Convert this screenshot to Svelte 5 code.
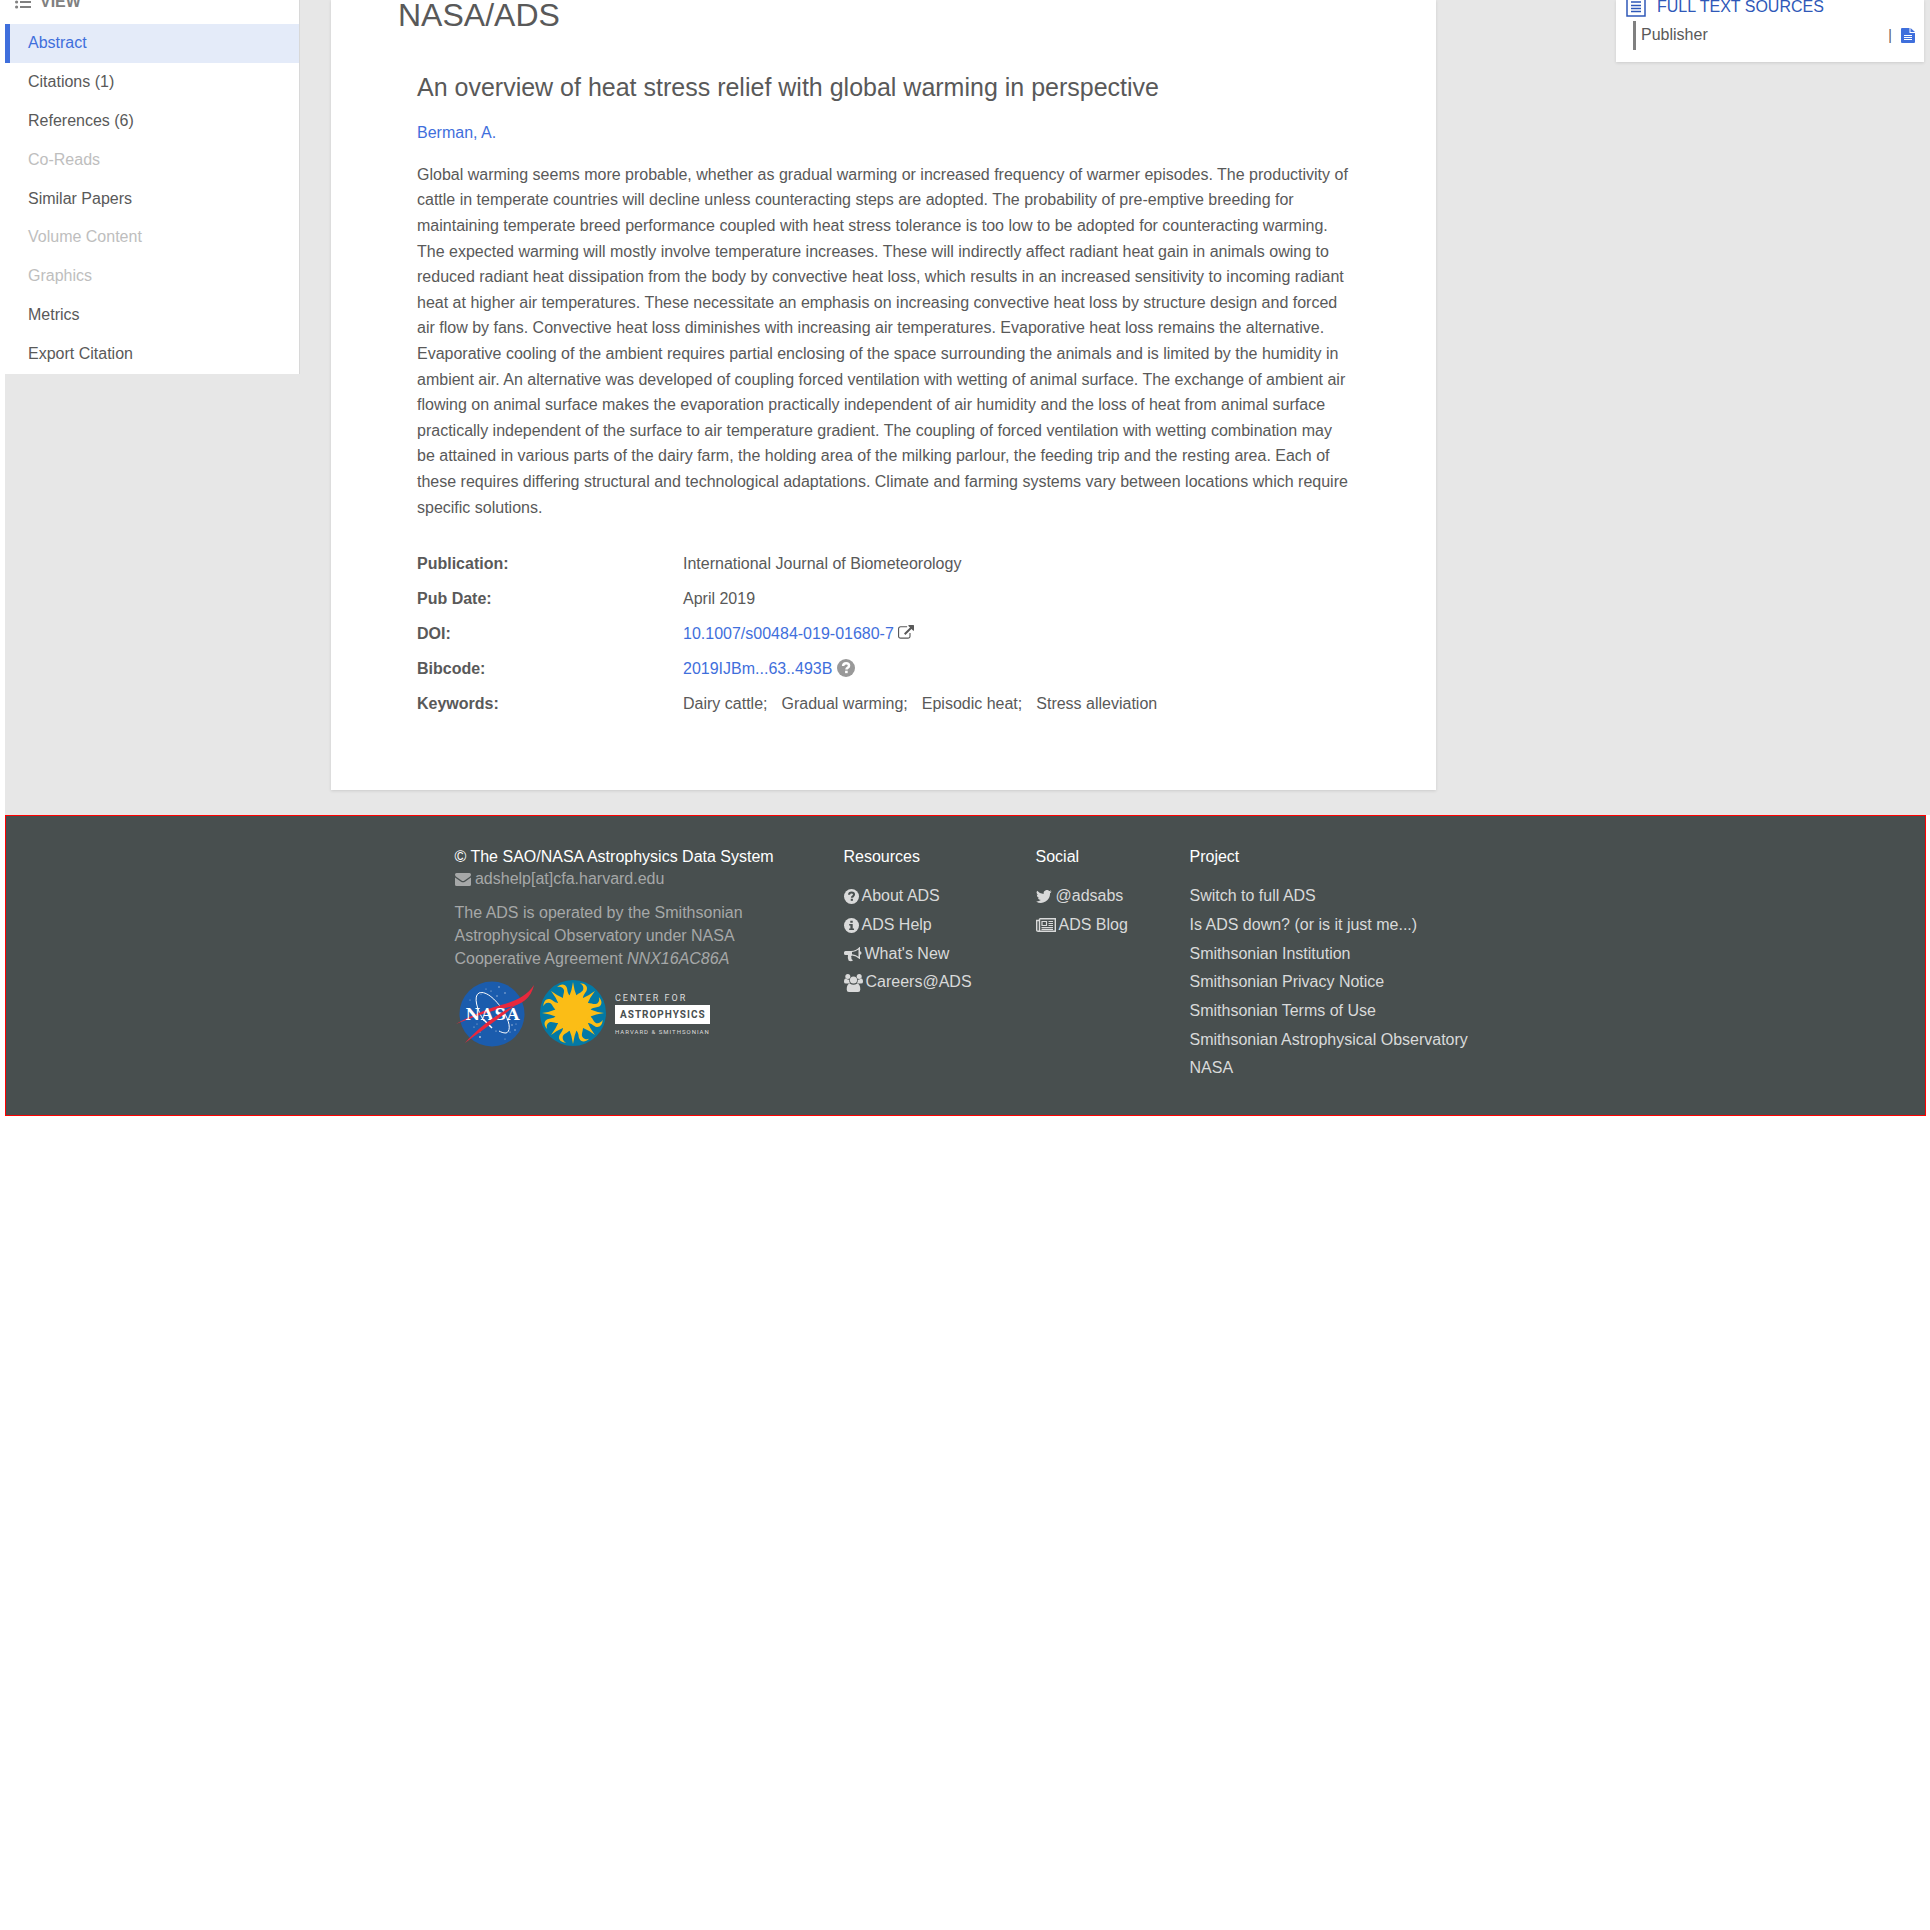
<script>
  const views = [
    { label: 'Abstract', state: 'active' },
    { label: 'Citations (1)', state: '' },
    { label: 'References (6)', state: '' },
    { label: 'Co-Reads', state: 'disabled' },
    { label: 'Similar Papers', state: '' },
    { label: 'Volume Content', state: 'disabled' },
    { label: 'Graphics', state: 'disabled' },
    { label: 'Metrics', state: '' },
    { label: 'Export Citation', state: '' }
  ];

  const keywords = ['Dairy cattle', 'Gradual warming', 'Episodic heat', 'Stress alleviation'];

  const projectLinks = [
    'Switch to full ADS',
    'Is ADS down? (or is it just me...)',
    'Smithsonian Institution',
    'Smithsonian Privacy Notice',
    'Smithsonian Terms of Use',
    'Smithsonian Astrophysical Observatory',
    'NASA'
  ];

  // The sunburst alternates straight points with curved flames.
  const straightRays = [0, 45, 90, 135, 180, 225, 270, 315];
  const curvedRays = straightRays.map((a) => a + 22.5);
</script>

<div class="page">
  <div class="content">
    <nav class="views" aria-label="View">
      <h2>
        <svg width="16" height="14" viewBox="0 0 16 14" aria-hidden="true">
          <g fill="currentColor">
            <circle cx="1.6" cy="2" r="1.6" /><circle cx="1.6" cy="7" r="1.6" /><circle cx="1.6" cy="12" r="1.6" />
            <path d="M5 1h11v2H5zM5 6h11v2H5zM5 11h11v2H5z" />
          </g>
        </svg>
        VIEW
      </h2>
      <ul>
        {#each views as view}
          <li><a href="#view" class={view.state}>{view.label}</a></li>
        {/each}
      </ul>
    </nav>

    <main>
      <h1>NASA/ADS</h1>
      <article>
        <h2>An overview of heat stress relief with global warming in perspective</h2>
        <a class="author" href="#author">Berman, A.</a>
        <p>
          Global warming seems more probable, whether as gradual warming or increased frequency of warmer
          episodes. The productivity of cattle in temperate countries will decline unless counteracting
          steps are adopted. The probability of pre-emptive breeding for maintaining temperate breed
          performance coupled with heat stress tolerance is too low to be adopted for counteracting
          warming. The expected warming will mostly involve temperature increases. These will indirectly
          affect radiant heat gain in animals owing to reduced radiant heat dissipation from the body by
          convective heat loss, which results in an increased sensitivity to incoming radiant heat at
          higher air temperatures. These necessitate an emphasis on increasing convective heat loss by
          structure design and forced air flow by fans. Convective heat loss diminishes with increasing
          air temperatures. Evaporative heat loss remains the alternative. Evaporative cooling of the
          ambient requires partial enclosing of the space surrounding the animals and is limited by the
          humidity in ambient air. An alternative was developed of coupling forced ventilation with
          wetting of animal surface. The exchange of ambient air flowing on animal surface makes the
          evaporation practically independent of air humidity and the loss of heat from animal surface
          practically independent of the surface to air temperature gradient. The coupling of forced
          ventilation with wetting combination may be attained in various parts of the dairy farm, the
          holding area of the milking parlour, the feeding trip and the resting area. Each of these
          requires differing structural and technological adaptations. Climate and farming systems vary
          between locations which require specific solutions.
        </p>
        <dl>
          <dt>Publication:</dt>
          <dd>International Journal of Biometeorology</dd>
          <dt>Pub Date:</dt>
          <dd>April 2019</dd>
          <dt>DOI:</dt>
          <dd>
            <a href="#doi">10.1007/s00484-019-01680-7</a>
            <svg width="16" height="16" viewBox="0 0 1792 1792" aria-hidden="true">
              <path fill="currentColor" d="M1408 928v320q0 119-84.500 203.500T1120 1536H288q-119 0-203.500-84.500T0 1248V416q0-119 84.500-203.500T288 128h704q14 0 23 9t9 23v64q0 14-9 23t-23 9H288q-66 0-113 47t-47 113v832q0 66 47 113t113 47h832q66 0 113-47t47-113V928q0-14 9-23t23-9h64q14 0 23 9t9 23zm384-864v512q0 26-19 45t-45 19-45-19l-176-176-652 652q-10 10-23 10t-23-10L695 983q-10-10-10-23t10-23l652-652-176-176q-19-19-19-45t19-45 45-19h512q26 0 45 19t19 45z" />
            </svg>
          </dd>
          <dt>Bibcode:</dt>
          <dd>
            <a href="#bibcode">2019IJBm...63..493B</a>
            <svg class="help" width="18" height="18" viewBox="0 0 16 16" aria-hidden="true">
              <circle cx="8" cy="8" r="8" fill="currentColor" />
              <path d="M5.400 6.200C5.500 4.500 6.600 3.700 8.100 3.700c1.500 0 2.600.9 2.600 2.200 0 1.900-2.300 1.900-2.300 3.500" fill="none" stroke="#fff" stroke-width="2.200" />
              <path d="M7.200 10.400h2.300v2.200H7.200z" fill="#fff" />
            </svg>
          </dd>
          <dt>Keywords:</dt>
          <dd class="keywords">
            {#each keywords as keyword, i}
              <span>{keyword}{i < keywords.length - 1 ? ';' : ''}</span>
            {/each}
          </dd>
        </dl>
      </article>
    </main>

    <aside>
      <h2>
        <svg width="20" height="20" viewBox="0 0 20 20" aria-hidden="true">
          <path d="M1 1h18v18H1z" fill="none" stroke="currentColor" stroke-width="1.500" />
          <path d="M5 5h10M5 8.500h10M5 11.500h10M5 14.500h10" stroke="currentColor" stroke-width="1.500" />
        </svg>
        FULL TEXT SOURCES
      </h2>
      <div class="source">
        <span class="name">Publisher</span>
        <span class="divider">|</span>
        <a href="#publisher" aria-label="Publisher article">
          <svg width="14" height="15" viewBox="0 0 14 15" aria-hidden="true">
            <path d="M1 0h7.500v5H14v9q0 1-1 1H1q-1 0-1-1V1q0-1 1-1zM9.500 0L14 4H9.500z" fill="currentColor" />
            <path d="M3 7.500h8M3 9.500h8M3 11.500h8" stroke="#fff" />
          </svg>
        </a>
      </div>
    </aside>
  </div>

  <footer>
    <section class="about">
      <h3>© The SAO/NASA Astrophysics Data System</h3>
      <address>
        <svg width="16" height="13" viewBox="0 0 16 13" aria-hidden="true">
          <path d="M1.500 0h13Q16 0 16 1.500 16 3 14.500 4L9.500 7.500Q8 8.500 6.500 7.500L1.500 4Q0 3 0 1.500 0 0 1.500 0zM0 4.500l6 4.200q2 1.300 4 0l6-4.200v7q0 1.500-1.500 1.500h-13Q0 13 0 11.500z" fill="currentColor" />
        </svg>
        adshelp[at]cfa.harvard.edu
      </address>
      <p>The ADS is operated by the Smithsonian Astrophysical Observatory under NASA Cooperative Agreement <em>NNX16AC86A</em></p>
      <div class="logos">
        <a href="#nasa" aria-label="NASA">
          <svg width="80" height="68" viewBox="0 0 80 68">
            <circle cx="37" cy="35" r="32.500" fill="#1b5cad" />
            <g fill="#fff" opacity="0.700">
              <circle cx="44" cy="8" r=".7" /><circle cx="36" cy="12" r=".6" /><circle cx="31" cy="10" r=".5" />
              <circle cx="50" cy="14" r=".7" /><circle cx="42" cy="17" r=".7" /><circle cx="26" cy="15" r=".5" />
              <circle cx="19" cy="48" r=".6" /><circle cx="25" cy="53" r=".6" /><circle cx="22" cy="45" r=".5" />
              <circle cx="41" cy="52" r=".6" /><circle cx="57" cy="46" r=".7" /><circle cx="60" cy="51" r=".7" />
              <circle cx="61" cy="45" r=".5" /><circle cx="55" cy="53" r=".6" /><circle cx="25" cy="58" r=".9" />
              <circle cx="50" cy="60" r=".5" /><circle cx="15" cy="21" r=".5" /><circle cx="35" cy="47" r=".5" />
            </g>
            <path d="M29 42C22 31 18 17 24 14 31 11 43 22 50 35 56 46 55 53 51 54 48 54 46 53 44 52" fill="none" stroke="#fff" />
            <path d="M1 45C13 38 31 30 46 26 60 22 71 18 79 6 76 20 65 27 50 29 34 32 16 39 1 45z" fill="#e8283c" />
            <path d="M29 41l8 8" stroke="#fff" stroke-width="1.500" />
            <text x="38" y="41" text-anchor="middle" class="nasa-word">NASA</text>
            <path d="M10 64C24 48 39 37 62 25 45 39 26 52 10 64z" fill="#e8283c" />
          </svg>
        </a>
        <a href="#smithsonian" aria-label="Smithsonian">
          <svg width="66" height="68" viewBox="-33 -34 66 68">
            <circle r="33" fill="#0379a5" />
            <g fill="#fbbd16">
              <circle r="18" />
              {#each straightRays as angle}
                <path d="M-4-16Q-1-23 0-31 1-23 4-16z" transform="rotate({angle})" />
              {/each}
              {#each curvedRays as angle}
                <path d="M-4-16C-3-21 2-23 0-27-1-29-3-30-5-30 0-32 4-30 4-26 4-23 2-21 4-16z" transform="rotate({angle})" />
              {/each}
            </g>
          </svg>
        </a>
        <a class="cfa" href="#cfa" aria-label="Center for Astrophysics">
          <svg width="97" height="44" viewBox="0 0 97 44">
            <text x="0" y="10" class="cfa-top">CENTER FOR</text>
            <path d="M0 14h95v19H0z" fill="#fff" />
            <text x="5" y="27" class="cfa-mid">ASTROPHYSICS</text>
            <text x="0" y="43" class="cfa-low">HARVARD &amp; SMITHSONIAN</text>
          </svg>
        </a>
      </div>
    </section>

    <section>
      <h3>Resources</h3>
      <ul>
        <li>
          <a href="#about">
            <svg width="15" height="15" viewBox="0 0 16 16" aria-hidden="true">
              <circle cx="8" cy="8" r="8" fill="currentColor" />
              <path d="M5.400 6.200C5.500 4.500 6.600 3.700 8.100 3.700c1.500 0 2.600.9 2.600 2.200 0 1.900-2.300 1.900-2.300 3.500" fill="none" stroke="#484f4f" stroke-width="2.200" />
              <path d="M7.200 10.400h2.300v2.200H7.200z" fill="#484f4f" />
            </svg>
            About ADS
          </a>
        </li>
        <li>
          <a href="#help">
            <svg width="15" height="15" viewBox="0 0 16 16" aria-hidden="true">
              <circle cx="8" cy="8" r="8" fill="currentColor" />
              <path d="M6.700 2.800h2.600v2.300H6.700zM5.500 6.400h3.800v4.900h1.400v1.600H5.500v-1.600h1.300V8H5.500z" fill="#484f4f" />
            </svg>
            ADS Help
          </a>
        </li>
        <li>
          <a href="#new">
            <svg width="18" height="15" viewBox="0 0 18 15" aria-hidden="true">
              <path d="M0 5.500Q0 4 1.500 4H7q5 0 8.500-4H16v4.200q1.500.3 1.500 1.800T16 7.800V12h-.5Q12 8.700 8 8.400q-1.600.9-.5 2.300-.9 1.200 1.500 2.600-1.600 1.700-4.300.5Q3.300 11 4 8H1.500Q0 8 0 6.500zM8 5v2.200q3.500.3 6.500 2.600V2.400Q11.500 4.700 8 5z" fill="currentColor" fill-rule="evenodd" />
            </svg>
            What's New
          </a>
        </li>
        <li>
          <a href="#careers">
            <svg width="19" height="18" viewBox="0 0 19 18" aria-hidden="true">
              <g fill="currentColor">
                <circle cx="3.800" cy="2.600" r="2.500" /><circle cx="15.200" cy="2.600" r="2.500" /><circle cx="9.500" cy="6" r="3.600" />
                <path d="M0 8q0-3.500 1.600-3.500Q4 6 5.200 5.500 5 8 6.300 9.500H2Q0 9.500 0 8zM19 8q0-3.500-1.600-3.500Q15 6 13.800 5.500 14 8 12.700 9.500H17q2 0 2-1.500zM2.700 15.500q0-5.800 3.300-5.800 3.500 2.200 7 0 3.300 0 3.300 5.800 0 2.500-2.300 2.500H5q-2.300 0-2.300-2.500z" />
              </g>
            </svg>
            Careers@ADS
          </a>
        </li>
      </ul>
    </section>

    <section>
      <h3>Social</h3>
      <ul>
        <li>
          <a href="#twitter">
            <svg width="17" height="13" viewBox="0 0 26 20" aria-hidden="true">
              <path d="M24 2.400a10 10 0 0 1-2.800.8A5 5 0 0 0 23.300.5a10 10 0 0 1-3.100 1.200 4.900 4.900 0 0 0-8.400 4.500A14 14 0 0 1 1.700 1a4.900 4.900 0 0 0 1.500 6.600A5 5 0 0 1 1 7v.1a4.900 4.900 0 0 0 3.900 4.800 5 5 0 0 1-2.200.1 4.900 4.900 0 0 0 4.600 3.400A9.900 9.900 0 0 1 0 17.500 14 14 0 0 0 21.500 5a10 10 0 0 0 2.500-2.600z" fill="currentColor" />
            </svg>
            @adsabs
          </a>
        </li>
        <li>
          <a href="#blog">
            <svg width="20" height="14" viewBox="0 0 20 14" aria-hidden="true">
              <path d="M3.500.7h15.800v12.600H2.200Q.7 13.300.7 12V2.500h2.800M3.500.7V12q0 1.300-1.300 1.300" fill="none" stroke="currentColor" stroke-width="1.400" />
              <path d="M6 3.500h4.500v4H6zM12.500 3.500H17M12.500 5.500H17M12.500 7.500H17M5.500 9.500H17M5.500 11.300H17" fill="none" stroke="currentColor" stroke-width="1.200" />
            </svg>
            ADS Blog
          </a>
        </li>
      </ul>
    </section>

    <section>
      <h3>Project</h3>
      <ul>
        {#each projectLinks as link}
          <li><a href="#project">{link}</a></li>
        {/each}
      </ul>
    </section>
  </footer>
</div>

<style>
  :global(body) {
    margin: 0;
    background: #fff;
  }

  .page {
    padding-left: 5px;
    font: 16px/1.43 'Liberation Sans', Arial, sans-serif;
    color: #595959;
  }

  h1, h2, h3, p, ul, dl, dd {
    margin: 0;
    padding: 0;
    font-weight: 400;
  }

  ul {
    list-style: none;
  }

  a {
    color: #3f6fdc;
    text-decoration: none;
  }

  .content {
    display: grid;
    grid-template-columns: 295px minmax(0, 1105px) minmax(308px, auto);
    column-gap: 31px;
    align-items: start;
    padding: 0 6px 25px 0;
    background: #e7e7e7;
  }

  .views {
    background: #fff;
    border-right: 1px solid #d8d8d8;
  }

  .views h2 {
    display: flex;
    align-items: center;
    gap: 9px;
    height: 24px;
    margin-top: -10px;
    padding: 0 10px 10px;
    font-size: 16px;
    font-weight: 700;
    color: #808080;
  }

  .views a {
    display: block;
    padding: 8px 18px;
    border-left: 5px solid transparent;
    color: #595959;
  }

  .views .active {
    background: #e4ebf9;
    border-color: #3f6fdc;
    color: #3f6fdc;
  }

  .views .disabled {
    color: #bebebe;
  }

  main {
    padding: 0 86px 74px 67px;
    background: #fff;
    box-shadow: 0 1px 3px rgba(0, 0, 0, 0.12);
  }

  h1 {
    margin-top: -3px;
    font-size: 32px;
    line-height: 36px;
  }

  article {
    padding: 40px 0 0 19px;
  }

  article h2 {
    font-size: 25px;
    line-height: 28px;
  }

  .author {
    display: block;
    margin-top: 21px;
  }

  article p {
    margin-top: 17px;
    line-height: 1.6;
  }

  dl {
    display: grid;
    grid-template-columns: 266px 1fr;
    row-gap: 12px;
    margin-top: 33px;
  }

  dt {
    font-weight: 700;
  }

  dd svg {
    vertical-align: -2px;
  }

  dd .help {
    color: #999;
    vertical-align: -3px;
  }

  .keywords {
    display: flex;
    gap: 14px;
  }

  aside {
    width: 308px;
    box-sizing: border-box;
    justify-self: end;
    padding: 0 9px 12px 10px;
    background: #fff;
    box-shadow: 0 1px 3px rgba(0, 0, 0, 0.12);
  }

  aside h2 {
    display: flex;
    align-items: center;
    gap: 11px;
    height: 26px;
    margin-top: -6px;
    font-size: 16px;
    color: #2f58b8;
  }

  .source {
    display: flex;
    align-items: center;
    height: 29px;
    margin: 1px 0 0 7px;
    padding-left: 5px;
    border-left: 3px solid #808080;
  }

  .source .name {
    flex: 1;
  }

  .source .divider {
    margin-right: 9px;
    font-size: 14px;
  }

  .source a {
    display: flex;
  }

  footer {
    display: grid;
    grid-template-columns: 389px 192px 154px 287px;
    justify-content: center;
    margin-right: 4px;
    padding: 30px 0 32px;
    border: 1px solid #f00;
    background: #484f4f;
    color: #a6a8a8;
  }

  h3 {
    font-size: 16px;
    white-space: nowrap;
    color: #fff;
  }

  address {
    font-style: normal;
  }

  address svg {
    vertical-align: -2px;
  }

  .about p {
    width: 300px;
    margin-top: 11px;
  }

  footer ul {
    margin-top: 14px;
    line-height: 1.79;
  }

  footer li a {
    display: flex;
    align-items: center;
    gap: 3px;
    color: #d9dada;
    white-space: nowrap;
  }

  .logos {
    display: flex;
    align-items: center;
    gap: 5px;
    margin-top: 8px;
  }

  .logos svg {
    display: block;
  }

  .cfa {
    margin-left: 4px;
  }

  .nasa-word {
    font: 700 16px 'DejaVu Serif', serif;
    letter-spacing: 1px;
    fill: #fff;
  }

  .cfa-top, .cfa-mid, .cfa-low {
    font-family: Roboto, sans-serif;
  }

  .cfa-top {
    font-size: 9px;
    letter-spacing: 2px;
    fill: #ddd;
  }

  .cfa-mid {
    font-size: 10px;
    font-weight: 700;
    letter-spacing: 1px;
    fill: #484f4f;
  }

  .cfa-low {
    font-size: 6px;
    letter-spacing: 1px;
    fill: #ddd;
  }
</style>
